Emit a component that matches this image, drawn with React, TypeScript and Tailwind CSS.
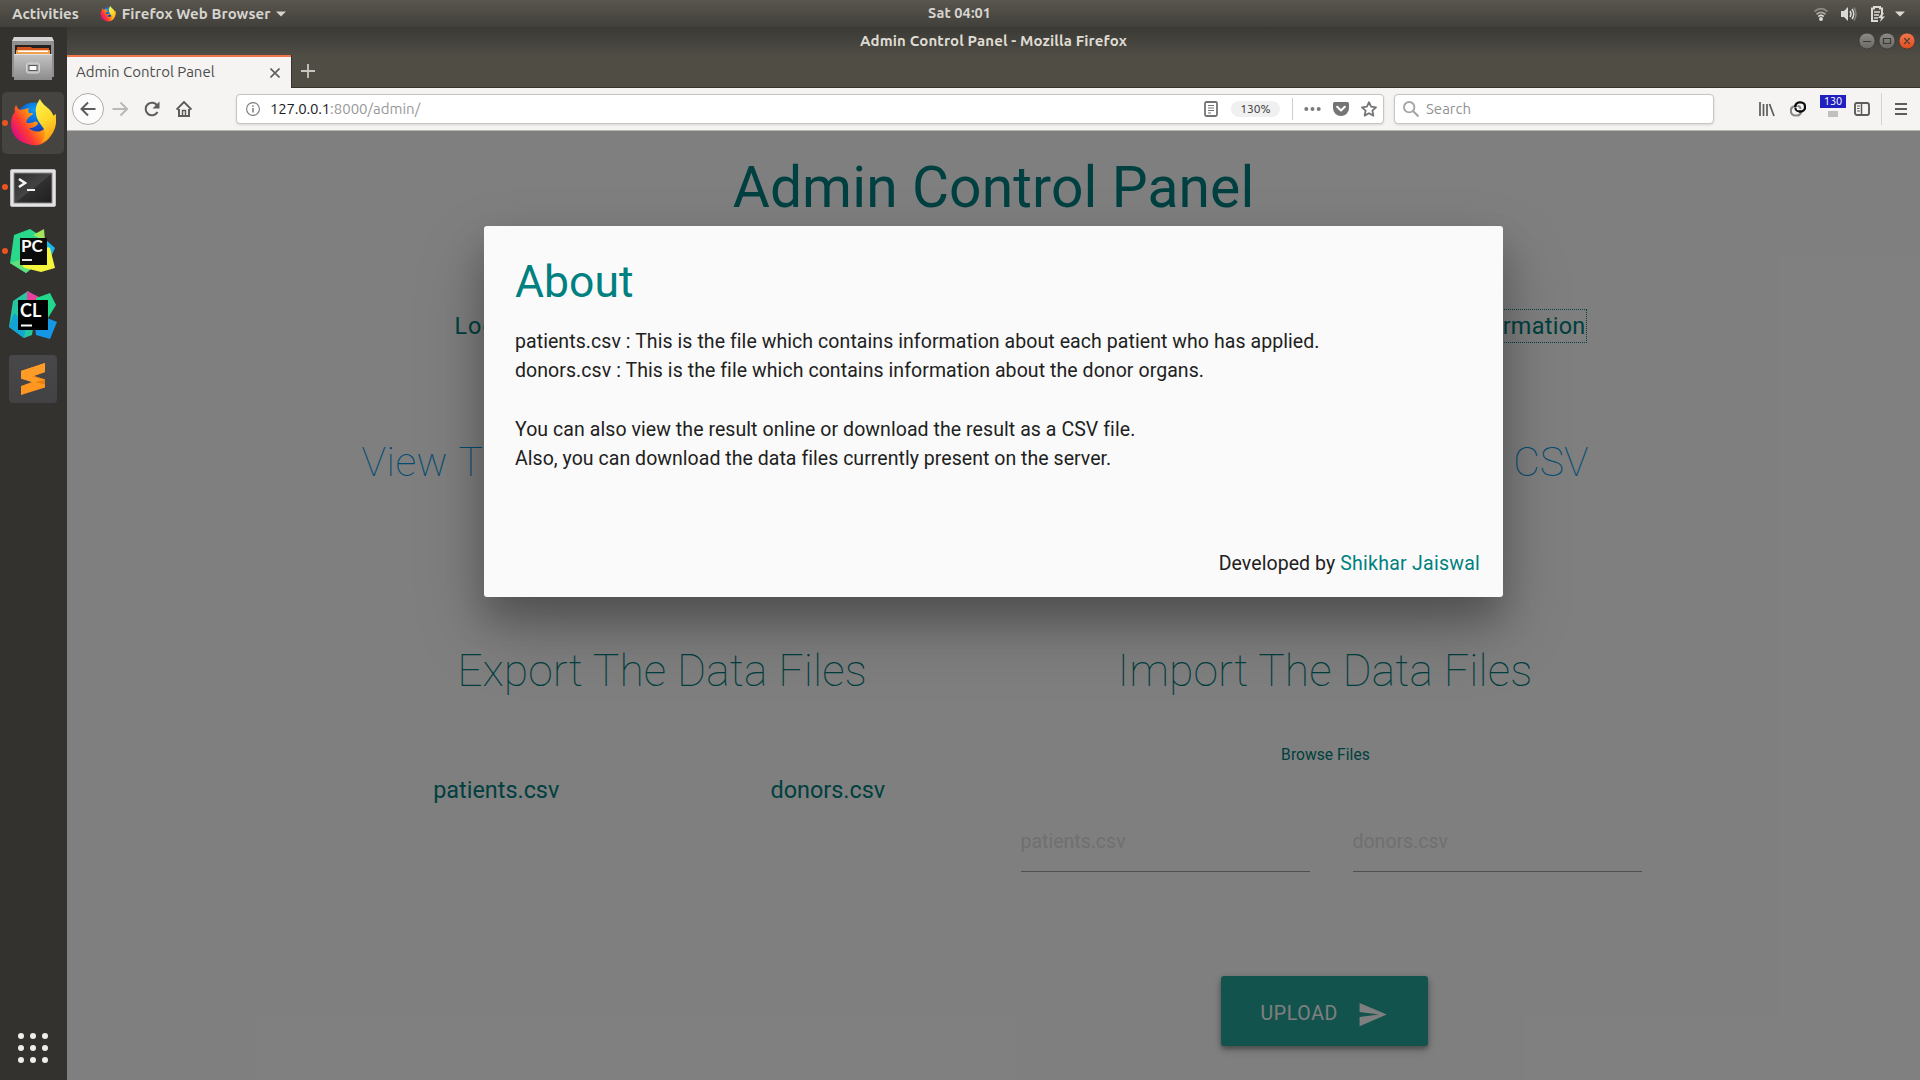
import React from "react";

const FirefoxLogo = ({ className }: { className: string }) => (
  <svg className={className} viewBox="0 0 46 48">
    <defs>
      <linearGradient id="ffBody" x1="0.85" y1="0.3" x2="0.1" y2="0.75">
        <stop offset="0" stopColor="#ffc81c" />
        <stop offset="0.4" stopColor="#ff9010" />
        <stop offset="0.7" stopColor="#ff3b32" />
        <stop offset="1" stopColor="#e0107a" />
      </linearGradient>
      <radialGradient id="ffGlobe" cx="0.5" cy="0.2" r="0.8">
        <stop offset="0" stopColor="#0a9cf5" />
        <stop offset="0.55" stopColor="#0a55d0" />
        <stop offset="1" stopColor="#3a1a7c" />
      </radialGradient>
      <linearGradient id="ffFlame" x1="0.3" y1="0" x2="0.6" y2="1">
        <stop offset="0" stopColor="#fff04a" />
        <stop offset="0.5" stopColor="#ffd92c" />
        <stop offset="1" stopColor="#ff9a10" />
      </linearGradient>
    </defs>
    <circle cx="24" cy="22" r="18.5" fill="url(#ffGlobe)" />
    <path
      d="M6 6c1 2 2 4 4 5 3-1 7-1 9-2-1 2-1 4 0 5h4c0 2-3 3-5 5l-2 4c2 2 5 1 8 0 2-1 4 0 4 2-2 2-4 4-9 4 3 4 11 5 15 1l4-10 8-5c1 10-1 17-6 23-6 8-14 10-22 7C6 42 1 34 1 25c0-5 1-9 4-12-1-3 0-5 1-7z"
      fill="url(#ffBody)"
    />
    <path
      d="M30 0c2 5 6 7 10 11 5 6 6 13 3 20-2 6-6 10-12 13 4-5 5-9 3-14-3-5-8-9-8-16-1-5 1-10 4-14z"
      fill="url(#ffFlame)"
    />
  </svg>
);

const FilesIcon = () => (
  <svg className="h-[46px] w-[42px]" viewBox="0 0 42 46">
    <defs>
      <linearGradient id="cab" x1="0" y1="0" x2="0" y2="1">
        <stop offset="0" stopColor="#c4c4c4" />
        <stop offset="1" stopColor="#8c8c8c" />
      </linearGradient>
    </defs>
    <path d="M2 1h38l2 5v35H0V6z" fill="#8f8f8f" />
    <path d="M2 1h38l2 4H0z" fill="#d4d4d4" />
    <rect x="3" y="9" width="36" height="12" fill="#232220" />
    <path d="M5 11h14l1 1h17v8H5z" fill="#d2521c" />
    <path d="M4 14h34v6H4z" fill="#f0a04c" />
    <path d="M6 14.500h30v1.500H6z" fill="#fff" />
    <rect x="2" y="18" width="38" height="26" fill="url(#cab)" />
    <path d="M2 18h38v1H2z" fill="#e0e0e0" />
    <rect x="14.500" y="27" width="13" height="10" rx="2" fill="#b8b8b8" stroke="#d6d6d6" />
    <rect x="17" y="29.500" width="8" height="5" fill="#fafafa" stroke="#555" />
  </svg>
);

const TerminalIcon = () => (
  <svg className="mt-[2px] h-[38px] w-[46px]" viewBox="0 0 46 38">
    <defs>
      <linearGradient id="scr" x1="0" y1="0" x2="1" y2="1">
        <stop offset="0" stopColor="#2c2c2c" />
        <stop offset="0.5" stopColor="#444" />
        <stop offset="0.52" stopColor="#303030" />
        <stop offset="1" stopColor="#1e1e1e" />
      </linearGradient>
    </defs>
    <rect x="0.500" y="0.500" width="45" height="37" rx="1.500" fill="#e4e4e4" stroke="#bdbdbd" />
    <rect x="4" y="4" width="38" height="30" fill="url(#scr)" stroke="#8a8a8a" />
    <path d="M9 10l6 4-6 4" fill="none" stroke="#f2f2f2" strokeWidth="2.600" />
    <path d="M17 21h8" stroke="#f2f2f2" strokeWidth="2" />
  </svg>
);

const PyCharmIcon = () => (
  <div className="relative h-[46px] w-[46px]">
    <svg className="h-[46px] w-[46px]" viewBox="0 0 46 46">
      <path d="M36 12l9 8-5 11-8 2z" fill="#18b8f0" />
      <path d="M4 7L20 1l14 9-4 24-14 11L0 35z" fill="#2ad88c" />
      <path d="M23 7l11-6 1 12z" fill="#a4e45a" />
      <path d="M0 35l12-4 14 6-10 8z" fill="#5fe07a" />
      <path d="M12 38l26-19 2 1 5 20-14 4-16-4z" fill="#f6f63c" />
      <rect x="10" y="10" width="27" height="27" fill="#0b0b0b" />
      <path d="M12 32h10" stroke="#fff" strokeWidth="1.800" />
    </svg>
    <span className="absolute left-[11px] top-[10px] font-['Lato'] text-[17px] font-bold leading-[16px] text-white">PC</span>
  </div>
);

const CLionIcon = () => (
  <div className="relative h-[48px] w-[48px]">
    <svg className="h-[48px] w-[48px]" viewBox="0 0 48 48">
      <path d="M4 10L19 0l10 8-6 36-8 3L0 36z" fill="#26c6a0" />
      <path d="M0 36l5-14 12 12-2 13z" fill="#12a4d4" />
      <path d="M18 0l12 6-2 6H18z" fill="#e8409c" />
      <path d="M27 7l14-5 6 12-8 13H27z" fill="#22d88a" />
      <path d="M26 36l12-9 10 4-7 17-14-4z" fill="#1498e6" />
      <rect x="9" y="9" width="30" height="30" fill="#000" />
      <path d="M12 34.500h11" stroke="#fff" strokeWidth="2" />
    </svg>
    <span className="absolute left-[11px] top-[10px] font-['Lato'] text-[18px] font-bold leading-[18px] text-white">CL</span>
  </div>
);

const SublimeIcon = () => (
  <div className="flex h-12 w-12 items-center justify-center rounded bg-gradient-to-b from-[#48484a] to-[#424244]">
    <svg className="h-8 w-[26px]" viewBox="0 0 26 32">
      <path d="M1 8L25 0v9L14 13l11 3.500v8L1 32v-9l11-4L1 15.500z" fill="#ff9620" />
      <path d="M1 15.500L14 13l11 3.500v5z" fill="#e87f0c" />
      <path d="M1 8L25 0v9L12 13.200 25 17 13 19.200 1 15.500z" fill="#ff9c28" />
    </svg>
  </div>
);

const DockItem = ({ children, dot, active }: { children: React.ReactNode; dot?: boolean; active?: boolean }) => (
  <div className="relative flex h-16 w-[66px] items-center justify-center">
    <div className={active ? "flex h-[62px] w-[62px] items-center justify-center rounded-[5px] bg-[#454440]" : "flex h-[62px] w-[62px] items-center justify-center"}>
      {children}
    </div>
    {dot && <span className="absolute left-[2px] top-[29px] h-[6px] w-[6px] rounded-full bg-[#e95420]" />}
  </div>
);

const UI = "font-['Ubuntu','Noto_Sans',sans-serif]";

function TopBar() {
  return (
    <header className={`${UI} relative flex h-[27px] items-center bg-gradient-to-b from-[#59564e] to-[#42403b] text-[15px] font-semibold text-[#d6d4cf]`}>
      <span className="ml-[12px] leading-5">Activities</span>
      <FirefoxLogo className="ml-[21px] h-4 w-4" />
      <span className="ml-[6px] leading-5 tracking-[0.08px]">Firefox Web Browser</span>
      <span className="absolute left-[928px] top-[3px] text-[14.5px] leading-5 tracking-[0.1px]">Sat 04:01</span>
      <svg className="ml-[5px] h-[6px] w-[10px]" viewBox="0 0 10 6"><path d="M0 0.500h10L5 5.500z" fill="#d4d2cc" /></svg>
      <div className="ml-auto mr-[15px] flex items-center">
        <svg className="h-4 w-[14px]" viewBox="0 0 14 16">
          <g fill="none" stroke="#8b8983" strokeWidth="1.800">
            <path d="M0.500 5.500c4-3.700 9-3.700 13 0" />
            <path d="M2.500 8.300c3-2.600 6-2.600 9 0" stroke="#a8a6a0" />
          </g>
          <path d="M4.200 10.500c2-1.600 3.600-1.600 5.600 0" fill="none" stroke="#dcdad5" strokeWidth="1.600" />
          <circle cx="7" cy="13" r="2" fill="#dcdad5" />
        </svg>
        <svg className="ml-[13px] h-4 w-4" viewBox="0 0 16 16">
          <path d="M0 5h3l4-4v14l-4-4H0z" fill="#dcdad5" />
          <path d="M9 5q2 3 0 6" fill="none" stroke="#dcdad5" strokeWidth="1.500" />
          <path d="M11 3q3.500 5 0 10" fill="none" stroke="#dcdad5" strokeWidth="1.500" />
          <path d="M13 1.500q4 6.500 0 13" fill="none" stroke="#85837d" strokeWidth="1.500" />
        </svg>
        <svg className="ml-[14px] h-4 w-[15px]" viewBox="0 0 15 16">
          <path d="M7 15H1V2.500h2V1h6v1.500h2V8" fill="none" stroke="#dcdad5" strokeWidth="2" />
          <path d="M3 6h6M3 9h5M3 12h4" stroke="#dcdad5" strokeWidth="1.400" />
          <path d="M11 7l-4 5h3l-1 4 5-5.500h-3L13 7z" fill="#dcdad5" />
        </svg>
        <svg className="ml-[9px] h-[6px] w-[10px]" viewBox="0 0 10 6"><path d="M0 0.500h10L5 5.500z" fill="#dcdad5" /></svg>
      </div>
    </header>
  );
}

function TitleBar() {
  return (
    <div className={`${UI} relative flex h-[28px] items-center justify-end bg-gradient-to-b from-[#3a3934] to-[#4e4c45] pr-[5px]`}>
      <span className="absolute inset-x-0 top-[4px] text-center text-[15px] font-bold leading-5 tracking-[0.13px] text-[#dfdbd2]">Admin Control Panel - Mozilla Firefox</span>
      <svg className="h-[18px] w-[58px]" viewBox="0 0 58 18">
        <defs>
          <linearGradient id="wb" x1="0" y1="0" x2="0" y2="1"><stop offset="0" stopColor="#8c8b85" /><stop offset="1" stopColor="#6a6963" /></linearGradient>
          <linearGradient id="wc" x1="0" y1="0" x2="0" y2="1"><stop offset="0" stopColor="#f4764e" /><stop offset="1" stopColor="#de4d1c" /></linearGradient>
        </defs>
        <circle cx="10" cy="9" r="8" fill="url(#wb)" stroke="#35342f" strokeWidth="0.700" />
        <circle cx="30" cy="9" r="8" fill="url(#wb)" stroke="#35342f" strokeWidth="0.700" />
        <circle cx="50" cy="9" r="8" fill="url(#wc)" stroke="#35342f" strokeWidth="0.700" />
        <path d="M6 9.500h8M26.500 6.500h7v5h-7zM47.200 6.200l5.600 5.600M52.800 6.200l-5.600 5.600" fill="none" stroke="#3b3a35" strokeWidth="1.200" />
      </svg>
    </div>
  );
}

function TabStrip() {
  return (
    <div className={`${UI} flex h-[33px] bg-[#504d45]`}>
      <div className="flex w-[224px] items-center border-t-2 border-[#f0764a] bg-[#f5f4f2] pl-[9px] pr-[11px] text-[15px] text-[#4c4c4c]">
        <span>Admin Control Panel</span>
        <svg className="ml-auto h-[10px] w-[10px]" viewBox="0 0 10 10"><path d="M0.500 0.500l9 9M9.500 0.500l-9 9" stroke="#5e5e5e" strokeWidth="1.600" /></svg>
      </div>
      <div className="flex flex-1 items-center border-b border-l border-[#35342f] pl-[9px]">
        <svg className="h-[14px] w-[14px]" viewBox="0 0 14 14"><path d="M7 0v14M0 7h14" stroke="#c8c6c0" strokeWidth="1.800" /></svg>
      </div>
    </div>
  );
}

function Toolbar() {
  const ink = "#5c5c5b";
  return (
    <div className={`${UI} flex h-[43px] items-center border-b border-[#b8b6b3] bg-[#f5f4f2] text-[15px]`}>
      <div className="ml-[5px] flex h-8 w-8 items-center justify-center rounded-full border border-[#aeadab] bg-[#fcfcfc]">
        <svg className="h-4 w-4" viewBox="0 0 16 16"><path d="M15.500 8H2M8 1.500L1.500 8 8 14.500" fill="none" stroke={ink} strokeWidth="2" /></svg>
      </div>
      <svg className="ml-2 h-4 w-4" viewBox="0 0 16 16"><path d="M0.500 8H14M8.500 1.500L15 8l-6.500 6.500" fill="none" stroke="#b9b8b6" strokeWidth="2" /></svg>
      <svg className="ml-4 h-4 w-4" viewBox="0 0 16 16">
        <path d="M13.500 11a6.300 6.300 0 1 1 0-6" fill="none" stroke={ink} strokeWidth="2" />
        <path d="M15.500 0.500v7h-7z" fill={ink} />
      </svg>
      <svg className="ml-4 h-4 w-4" viewBox="0 0 16 16">
        <path d="M0.500 8.500L8 1l7.500 7.500" fill="none" stroke={ink} strokeWidth="1.900" />
        <path d="M3 8v7h10V8" fill="none" stroke={ink} strokeWidth="2" />
        <path d="M6.500 15V9.500h3V15" fill="none" stroke={ink} strokeWidth="1.500" />
      </svg>
      <div className="ml-11 flex h-[30px] w-[1148px] items-center rounded-[4px] border border-[#c6c5c3] bg-white shadow-sm">
        <svg className="ml-[9px] h-[14px] w-[14px]" viewBox="0 0 14 14">
          <circle cx="7" cy="7" r="6.400" fill="none" stroke="#7a7a7a" strokeWidth="1.100" />
          <path d="M7 6v4.500M7 3.300v1.500" stroke="#7a7a7a" strokeWidth="1.500" />
        </svg>
        <span className="ml-[10px] mt-px flex text-[#98989a]">
          <span className="tracking-[-0.2px] text-[#1c1c1c]">127.0.0.1</span>
          <span>:8000/admin/</span>
        </span>
        <svg className="ml-auto h-4 w-[14px]" viewBox="0 0 14 16">
          <rect x="1" y="1" width="12" height="14" rx="1.500" fill="none" stroke="#737373" strokeWidth="1.800" />
          <path d="M4 4.500h6M4 7h6M4 9.500h6M4 12h3" stroke="#737373" strokeWidth="1.100" />
        </svg>
        <span className="ml-[13px] flex h-4 w-[49px] items-center justify-center rounded-full bg-[#f0f0f0] text-[12px] text-[#333]">130%</span>
        <span className="ml-[12px] h-[22px] w-px bg-[#cfcecc]" />
        <svg className="ml-[11px] h-4 w-[17px]" viewBox="0 0 17 16"><circle cx="2.300" cy="8" r="2" fill="#7b7b7b" /><circle cx="8.500" cy="8" r="2" fill="#7b7b7b" /><circle cx="14.700" cy="8" r="2" fill="#7b7b7b" /></svg>
        <svg className="ml-[12px] h-4 w-4" viewBox="0 0 16 16">
          <path d="M1.500 1h13Q16 1 16 2.500V7a8 8 0 0 1-16 0V2.500Q0 1 1.500 1z" fill="#757575" />
          <path d="M4.200 5.800L8 9.500l3.800-3.700" fill="none" stroke="#fff" strokeWidth="2.100" strokeLinecap="round" strokeLinejoin="round" />
        </svg>
        <svg className="ml-3 mr-[6px] h-4 w-4" viewBox="0 0 16 16">
          <path d="M8 1.200l2.100 4.500 4.900.6-3.600 3.400 1 4.900L8 12.200l-4.400 2.400 1-4.900L1 6.300l4.900-.6z" fill="none" stroke="#757575" strokeWidth="1.800" strokeLinejoin="round" />
        </svg>
      </div>
      <div className="ml-[10px] flex h-[30px] w-[320px] items-center rounded-[4px] border border-[#c6c5c3] bg-white shadow-sm">
        <svg className="ml-[8px] h-4 w-4" viewBox="0 0 16 16"><circle cx="6.200" cy="6.200" r="5.200" fill="none" stroke="#a6a6a6" strokeWidth="1.900" /><path d="M10 10l5.500 5.500" stroke="#a6a6a6" strokeWidth="2.200" /></svg>
        <span className="ml-[7px] mt-px text-[#929292]">Search</span>
      </div>
      <svg className="ml-[45px] h-4 w-4" viewBox="0 0 16 16"><path d="M1 1v14M4.500 3v12M8 3v12M10.500 3l4.500 12" fill="none" stroke={ink} strokeWidth="1.700" /></svg>
      <svg className="ml-[15px] h-4 w-4" viewBox="0 0 16 16">
        <path d="M7 5H5.500a4.500 4.500 0 0 0 0 9.500h1.500a4.500 4.500 0 0 0 4.300-5" fill="none" stroke="#85858a" strokeWidth="2.200" />
        <path d="M5.200 6a4.500 4.500 0 0 1 4.300-4.700h1a4.500 4.500 0 0 1 0 9.200H9" fill="none" stroke="#0c0c0d" strokeWidth="2.300" />
        <path d="M7.500 5a3 3 0 0 1 3 3" fill="none" stroke="#85858a" strokeWidth="1.800" />
        <path d="M5.300 6.500a4 4 0 0 0 4 4" fill="none" stroke="#0c0c0d" strokeWidth="2" />
      </svg>
      <div className="ml-[14px] flex h-[28px] w-[26px] flex-col items-center self-start pt-[7px]">
        <span className="flex h-[13px] w-[26px] shrink-0 items-center justify-center bg-[#2020c0] text-[11px] leading-none text-white">130</span>
        <span className="mt-[3px] h-[6px] w-[10px] shrink-0 bg-[#c0c0c0]" />
      </div>
      <svg className="ml-2 h-4 w-4" viewBox="0 0 16 16">
        <rect x="1" y="2" width="14" height="12" rx="2" fill="none" stroke={ink} strokeWidth="1.900" />
        <path d="M7.500 2v12" stroke={ink} strokeWidth="1.500" />
        <path d="M3 5h3M3 7.500h2.500M3 10h3" stroke={ink} strokeWidth="1" />
      </svg>
      <span className="ml-[11px] h-8 w-px bg-[#d4d3d1]" />
      <svg className="ml-[13px] h-3 w-3" viewBox="0 0 12 12"><path d="M0 1h12M0 6h12M0 11h12" stroke={ink} strokeWidth="1.900" /></svg>
    </div>
  );
}

function Page() {
  return (
    <main className="relative flex-1 overflow-hidden bg-white font-['Roboto',sans-serif] text-[#008080]">
      <h1 className="mt-[25px] h-16 text-center text-[56.94px] leading-[64px] tracking-[0.12px]">Admin Control Panel</h1>
      <div className="mx-auto w-[1326px]">
        <nav className="mt-[90px] flex h-8 justify-between pl-[124px] pr-[71px] text-[23.4px] leading-8">
          <a className="tracking-[1px]">Log Out</a>
          <a className="tracking-[0.3px] outline-1 outline-dotted outline-[#008080]">More Information</a>
        </nav>
        <div className="mt-[92px] flex h-14 justify-between pl-[31px] pr-[68px] text-[41px] font-thin leading-[56px] text-[#039be5]">
          <a className="tracking-[0.5px]">View <span className="tracking-[3px]">T</span>he Result</a>
          <a>Download As CSV</a>
        </div>
        <div className="mt-[153px] grid grid-cols-2 text-center">
          <section>
            <h4 className="h-14 text-[44.46px] font-thin leading-[56px] tracking-[0.08px]">Export The Data Files</h4>
            <div className="mt-[75px] grid grid-cols-2 text-[23.4px] leading-8">
              <a>patients.csv</a>
              <a>donors.csv</a>
            </div>
          </section>
          <section>
            <h4 className="h-14 text-[44.46px] font-thin leading-[56px] tracking-[0.1px]">Import The Data Files</h4>
            <p className="mt-[44px] pl-px text-[15.6px] leading-6 tracking-[0.05px]">Browse Files</p>
            <div className="mr-[15px] mt-[59px] flex justify-end gap-[43px] text-left text-[19.5px] text-[#e0e0e0]">
              <div className="h-[46px] w-[289px] border-b border-[#9e9e9e] leading-8">patients.csv</div>
              <div className="h-[46px] w-[289px] border-b border-[#9e9e9e] leading-8">donors.csv</div>
            </div>
            <div className="ml-[227px] mt-[104px] flex h-[70px] w-[207px] items-center rounded-[3px] bg-[#26a69a] pl-[40px] text-[19.5px] tracking-[0.65px] text-white shadow-[0_3px_3px_rgba(0,0,0,0.14),0_1px_7px_rgba(0,0,0,0.12),0_4px_8px_rgba(0,0,0,0.25)]">
              <span className="mt-[5px]">UPLOAD</span>
              <svg className="ml-[19px] mt-[6px] h-[31px] w-[31px]" viewBox="0 0 24 24"><path d="M2.010 21L23 12 2.010 3 2 10l15 2-15 2z" fill="#fff" /></svg>
            </div>
          </section>
        </div>
      </div>
      <div className="absolute inset-0 bg-black/50" />
      <section className="absolute left-[417px] top-[95px] flex h-[371px] w-[1019px] flex-col rounded-[3px] bg-[#fafafa] px-[31px] text-[19.5px] leading-[29.25px] tracking-[0.07px] text-[#212121] shadow-[0_21px_36px_rgba(0,0,0,0.22),0_32px_71px_rgba(0,0,0,0.21)]">
        <h4 className="mt-[28px] h-14 text-[44.46px] leading-[56px] text-[#008080]">About</h4>
        <p className="mt-[17px]">
          patients.csv : This is the file which contains information about each patient who has applied.<br />
          donors.csv : This is the file which contains information about the donor organs.<br /><br />
          You can also view the result online or download the result as a CSV file.<br />
          <span className="tracking-[0.04px]">Also, you can download the data files currently present on the server.</span>
        </p>
        <p className="mr-[-8px] mt-[76px] text-right">Developed by <a className="tracking-[0.26px] text-[#008080]">Shikhar Jaiswal</a></p>
      </section>
    </main>
  );
}

export default function App() {
  return (
    <div className="flex h-[1080px] w-[1920px] flex-col overflow-hidden">
      <TopBar />
      <div className="flex min-h-0 flex-1">
        <aside className="flex w-[67px] shrink-0 flex-col bg-[#33322e]">
          <DockItem><FilesIcon /></DockItem>
          <DockItem dot active><FirefoxLogo className="h-[48px] w-[46px]" /></DockItem>
          <DockItem dot><TerminalIcon /></DockItem>
          <DockItem dot><PyCharmIcon /></DockItem>
          <DockItem><CLionIcon /></DockItem>
          <DockItem><SublimeIcon /></DockItem>
          <div className="mb-[17px] ml-[18px] mt-auto grid w-[30px] grid-cols-3 gap-[6px]">
            {Array.from({ length: 9 }, (_, i) => <span key={i} className="h-[6px] w-[6px] rounded-full bg-[#eeeeec]" />)}
          </div>
        </aside>
        <div className="flex min-w-0 flex-1 flex-col">
          <TitleBar />
          <TabStrip />
          <Toolbar />
          <Page />
        </div>
      </div>
    </div>
  );
}
